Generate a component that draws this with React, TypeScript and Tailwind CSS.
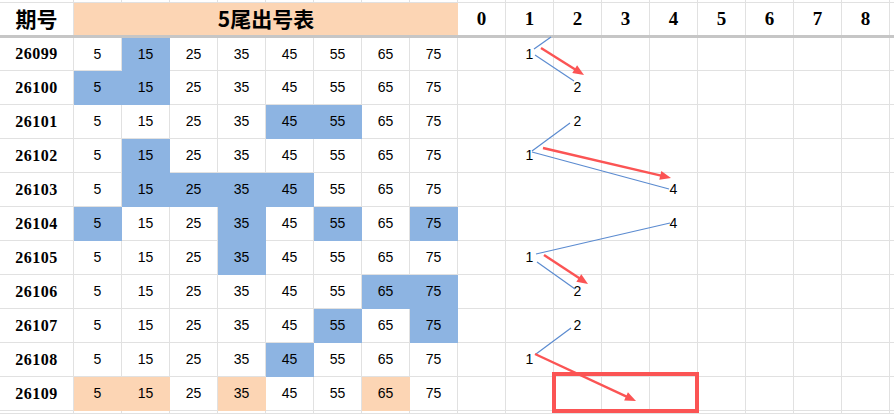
import React from 'react';

const TAILS = [5, 15, 25, 35, 45, 55, 65, 75];
const DIGITS = [0, 1, 2, 3, 4, 5, 6, 7, 8];

type Row = { id: string; marks: number[]; hit?: number; peach?: boolean };

const rows: Row[] = [
  { id: '26099', marks: [15], hit: 1 },
  { id: '26100', marks: [5, 15], hit: 2 },
  { id: '26101', marks: [45, 55], hit: 2 },
  { id: '26102', marks: [15], hit: 1 },
  { id: '26103', marks: [15, 25, 35, 45], hit: 4 },
  { id: '26104', marks: [5, 35, 55, 75], hit: 4 },
  { id: '26105', marks: [35], hit: 1 },
  { id: '26106', marks: [65, 75], hit: 2 },
  { id: '26107', marks: [55, 75], hit: 2 },
  { id: '26108', marks: [45], hit: 1 },
  { id: '26109', marks: [5, 15, 35, 65], peach: true },
];

const blueLines = [
  [534, 49, 551, 37],
  [535, 55, 574, 81],
  [532, 151, 570, 123],
  [532, 152, 669, 189],
  [536, 254, 670, 223],
  [537, 262, 575, 289],
  [536, 354, 571, 328],
];

const redArrows = [
  [541, 48, 584, 75],
  [543, 148, 671, 178],
  [544, 255, 588, 284],
  [535, 354, 636, 401],
];

function Arrow({ a }: { a: number[] }) {
  const [x1, y1, x2, y2] = a;
  const len = Math.hypot(x2 - x1, y2 - y1);
  const ux = (x2 - x1) / len;
  const uy = (y2 - y1) / len;
  const bx = x2 - ux * 11;
  const by = y2 - uy * 11;
  const px = -uy * 4.5;
  const py = ux * 4.5;
  return (
    <g>
      <line x1={x1} y1={y1} x2={x2 - ux * 8} y2={y2 - uy * 8} stroke="#fb5454" strokeWidth={2.4} />
      <polygon points={`${x2},${y2} ${bx + px},${by + py} ${bx - px},${by - py}`} fill="#fb5454" />
    </g>
  );
}

const line = 'border-[#e1e1e1]';
const num = "font-['Liberation_Sans',sans-serif] text-[14px] text-black";

function GridStrip({ h }: { h: string }) {
  return (
    <div className={`flex ${h}`}>
      <div className={`w-[74px] shrink-0 border-r border-b ${line}`} />
      {TAILS.map((t) => (
        <div key={t} className={`w-[48px] shrink-0 border-r border-b ${line}`} />
      ))}
      {DIGITS.map((d) => (
        <div key={d} className={`w-[48px] shrink-0 border-r border-b ${line}`} />
      ))}
      <div className={`flex-1 border-b ${line}`} />
    </div>
  );
}

export default function App() {
  return (
    <div className="relative w-[894px] h-[414px] overflow-hidden bg-white">
      <GridStrip h="h-[3px]" />

      {/* header */}
      <div className="flex h-[35px] border-b-[3px] border-b-[#c6c6c6]">
        <div className={`w-[74px] shrink-0 border-r ${line} flex items-center justify-center font-['Noto_Sans_CJK_SC',sans-serif] font-bold text-[21px] text-black`}>
          期号
        </div>
        <div className="w-[384px] shrink-0 bg-[#fcd5b4] flex items-center justify-center font-['Noto_Sans_CJK_SC',sans-serif] font-bold text-[21px] text-black">
          5尾出号表
        </div>
        {DIGITS.map((d) => (
          <div
            key={d}
            className={`w-[48px] shrink-0 border-r ${line} flex items-center justify-center font-['Liberation_Serif',serif] font-bold text-[19px] text-black`}
          >
            {d}
          </div>
        ))}
        <div className="flex-1" />
      </div>

      {rows.map((r, i) => (
        <div key={r.id} className={`flex ${i === 0 ? 'h-[33px]' : 'h-[34px]'}`}>
          <div className={`w-[74px] shrink-0 border-r border-b ${line} flex items-center justify-center font-['Liberation_Serif',serif] font-bold text-[16px] tracking-[0.5px] text-black`}>
            {r.id}
          </div>
          {TAILS.map((t) => {
            const on = r.marks.includes(t);
            const fill = on
              ? r.peach
                ? 'bg-[#fcd5b4] border-[#fcd5b4]'
                : 'bg-[#8db4e2] border-[#8db4e2]'
              : line;
            return (
              <div key={t} className={`w-[48px] shrink-0 border-r border-b ${fill} flex items-center justify-center ${num}`}>
                {t}
              </div>
            );
          })}
          {DIGITS.map((d) => (
            <div key={d} className={`w-[48px] shrink-0 border-r border-b ${line} flex items-center justify-center ${num}`}>
              {r.hit === d ? d : ''}
            </div>
          ))}
          <div className={`flex-1 border-b ${line}`} />
        </div>
      ))}

      <GridStrip h="h-[3px]" />

      <svg className="absolute inset-0 pointer-events-none" width={894} height={414}>
        {blueLines.map(([x1, y1, x2, y2], i) => (
          <line key={i} x1={x1} y1={y1} x2={x2} y2={y2} stroke="#5b8bd0" strokeWidth={1.2} />
        ))}
        {redArrows.map((a, i) => (
          <Arrow key={i} a={a} />
        ))}
        <rect x={554} y={374} width={143} height={37} fill="none" stroke="#fb5454" strokeWidth={4} />
      </svg>
    </div>
  );
}
